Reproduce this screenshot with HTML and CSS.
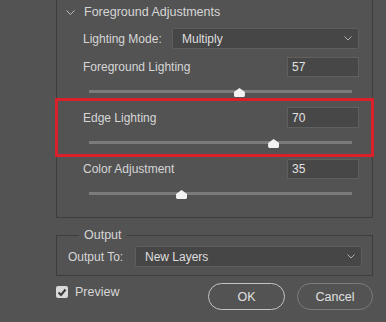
FILE: index.html
```html
<!DOCTYPE html>
<html>
<head>
<meta charset="utf-8">
<link rel="stylesheet" href="styles.css">
</head>
<body>
<div class="dialog">
  <div class="panel">
    <div class="header">
      <svg class="chev" width="9" height="6" viewBox="0 0 9 6"><path d="M0.5 0.5 L4.5 4.5 L8.5 0.5" fill="none" stroke="#bdbdbd" stroke-width="1"/></svg>
      <span>Foreground Adjustments</span>
    </div>
    <div class="row mode-row">
      <span class="label">Lighting Mode:</span>
      <div class="select mode-select"><span>Multiply</span><svg width="8" height="5" viewBox="0 0 8 5"><path d="M0.5 0.5 L4 4 L7.5 0.5" fill="none" stroke="#b0b0b0" stroke-width="1"/></svg></div>
    </div>
    <div class="row value-row">
      <span class="label">Foreground Lighting</span>
      <div class="input">57</div>
    </div>
    <div class="slider"><div class="track"><div class="thumb" style="left: 57%"></div></div></div>
    <div class="highlight">
      <div class="row value-row first">
        <span class="label">Edge Lighting</span>
        <div class="input">70</div>
      </div>
      <div class="slider"><div class="track"><div class="thumb" style="left: 70%"></div></div></div>
    </div>
    <div class="row value-row after">
      <span class="label">Color Adjustment</span>
      <div class="input">35</div>
    </div>
    <div class="slider last"><div class="track"><div class="thumb" style="left: 35%"></div></div></div>
  </div>

  <fieldset class="output">
    <legend>Output</legend>
    <div class="out-row">
      <span class="label">Output To:</span>
      <div class="select out-select"><span>New Layers</span><svg width="8" height="5" viewBox="0 0 8 5"><path d="M0.5 0.5 L4 4 L7.5 0.5" fill="none" stroke="#b0b0b0" stroke-width="1"/></svg></div>
    </div>
  </fieldset>

  <div class="footer">
    <label class="check">
      <span class="box"><svg width="10" height="9" viewBox="0 0 10 9"><path d="M1.5 4.5 L4 7 L8.5 1.5" fill="none" stroke="#3a3a3a" stroke-width="2"/></svg></span>
      <span>Preview</span>
    </label>
    <div class="buttons">
      <div class="btn ok">OK</div>
      <div class="btn cancel">Cancel</div>
    </div>
  </div>
</div>
</body>
</html>
```
FILE: styles.css
```css
html, body {
  margin: 0;
  padding: 0;
  background: #535353;
  width: 386px;
  height: 322px;
  overflow: hidden;
}
body {
  font-family: "Liberation Sans", Arial, sans-serif;
  font-size: 12px;
  color: #d6d6d6;
}
.dialog {
  margin-left: 56px;
  width: 317px;
}
.panel {
  border: 1px solid #3d3d3d;
  border-top: none;
  padding-bottom: 17px;
}
.header {
  height: 24px;
  display: flex;
  align-items: center;
  padding-left: 9px;
  font-size: 12.5px;
}
.chev {
  margin-right: 9px;
  margin-top: 1px;
}
.row {
  display: flex;
  align-items: center;
  padding-left: 26px;
  padding-right: 13px;
}
.label {
  flex: 1;
}
.mode-row {
  margin-top: 4px;
  height: 21px;
}
.mode-row .label {
  flex: none;
  width: 89px;
}
.select {
  box-sizing: border-box;
  height: 21px;
  background: #464646;
  border: 1px solid #5e5e5e;
  border-radius: 2px;
  display: flex;
  align-items: center;
  justify-content: space-between;
  padding: 0 6px 0 9px;
  color: #dedede;
}
.mode-select {
  flex: 1;
}
.value-row {
  margin-top: 8px;
  height: 20px;
}
.value-row.first {
  margin-top: 6px;
  height: 21px;
}
.value-row.after {
  margin-top: 2px;
}
.input {
  box-sizing: border-box;
  width: 72px;
  height: 100%;
  background: #474747;
  border: 1px solid #5f5f5f;
  padding-left: 4px;
  display: flex;
  align-items: center;
  color: #e2e2e2;
}
.slider {
  height: 21px;
  padding: 12px 20px 0 32px;
  box-sizing: border-box;
}
.highlight .slider {
  height: 26px;
  padding: 12px 19px 0 31px;
}
.highlight .row {
  padding-left: 25px;
  padding-right: 12px;
}
.track {
  position: relative;
  height: 3px;
  background: #7b7b7b;
  margin-top: 1px;
}
.thumb {
  position: absolute;
  top: -2px;
  width: 11px;
  height: 9px;
  margin-left: -5px;
  background: #f2f2f2;
  clip-path: polygon(0 45%, 50% 0, 100% 45%, 100% 88%, 90% 100%, 10% 100%, 0 88%);
}
.highlight {
  margin: 0 -2px;
  border: 3px solid #d9202b;
}
.output {
  margin: 10px 0 0 0;
  border: 1px solid #3d3d3d;
  padding: 4px 10px 8px 11px;
}
.output legend {
  padding: 0 5px;
  margin-left: 11px;
  font-size: 12.5px;
}
.out-row {
  display: flex;
  align-items: center;
}
.out-row .label {
  flex: none;
  width: 67px;
}
.out-select {
  flex: 1;
}
.footer {
  margin-top: 7px;
  height: 27px;
  display: flex;
  align-items: center;
  justify-content: space-between;
}
.check {
  display: flex;
  align-items: center;
  gap: 7px;
  margin-top: -9px;
  font-size: 12.5px;
}
.box {
  width: 12px;
  height: 12px;
  border-radius: 2px;
  background: #d9d9d9;
  display: flex;
  align-items: center;
  justify-content: center;
}
.buttons {
  display: flex;
  gap: 12px;
}
.btn {
  box-sizing: border-box;
  width: 77px;
  height: 27px;
  border-radius: 14px;
  display: flex;
  align-items: center;
  justify-content: center;
  font-size: 12.5px;
  color: #e0e0e0;
}
.ok {
  border: 1.5px solid #c4c4c4;
}
.cancel {
  width: 76px;
  border: 1px solid #7c7c7c;
}
```
